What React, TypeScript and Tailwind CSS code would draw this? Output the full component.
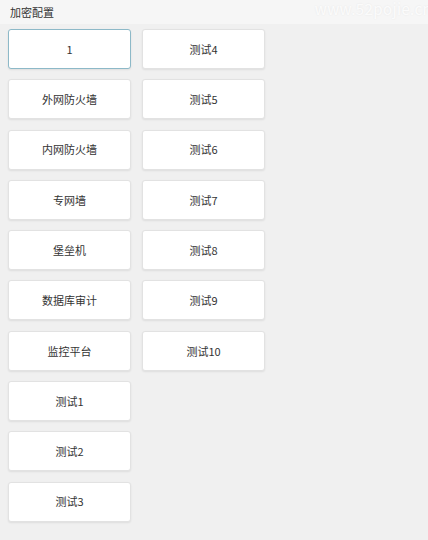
const left = ["1", "外网防火墙", "内网防火墙", "专网墙", "堡垒机", "数据库审计", "监控平台", "测试1", "测试2", "测试3"];
const right = ["测试4", "测试5", "测试6", "测试7", "测试8", "测试9", "测试10"];

function ItemButton({ label, active }: { label: string; active?: boolean }) {
  return (
    <button
      type="button"
      className={
        "h-[40px] w-[123px] rounded-[3px] bg-white text-[11px] text-[#333] shadow-[0_1px_2px_rgba(0,0,0,0.08)] " +
        (active ? "border border-[#8db9c8]" : "border border-[#e2e2e2]")
      }
    >
      {label}
    </button>
  );
}

export default function App() {
  const items = [...left, ...right];
  return (
    <div
      className="relative h-[540px] w-[428px] overflow-hidden bg-[#f0f0f0]"
      style={{ fontFamily: '"Microsoft YaHei", "Noto Sans CJK SC", sans-serif' }}
    >
      <div className="flex h-[24px] items-center bg-[#f6f6f6] pl-[10px] text-[11px] text-[#333]">
        加密配置
      </div>
      <span className="absolute right-[-4px] top-[-2px] text-[15px] tracking-wide text-white/80 [text-shadow:0_0_2px_rgba(0,0,0,0.08)]">
        www.52pojie.cn
      </span>
      <div className="ml-[8px] mt-[5px] grid grid-flow-col grid-rows-10 gap-x-[11px] gap-y-[10.3px] justify-start">
        {items.map((label, i) => (
          <ItemButton key={label} label={label} active={i === 0} />
        ))}
      </div>
    </div>
  );
}
